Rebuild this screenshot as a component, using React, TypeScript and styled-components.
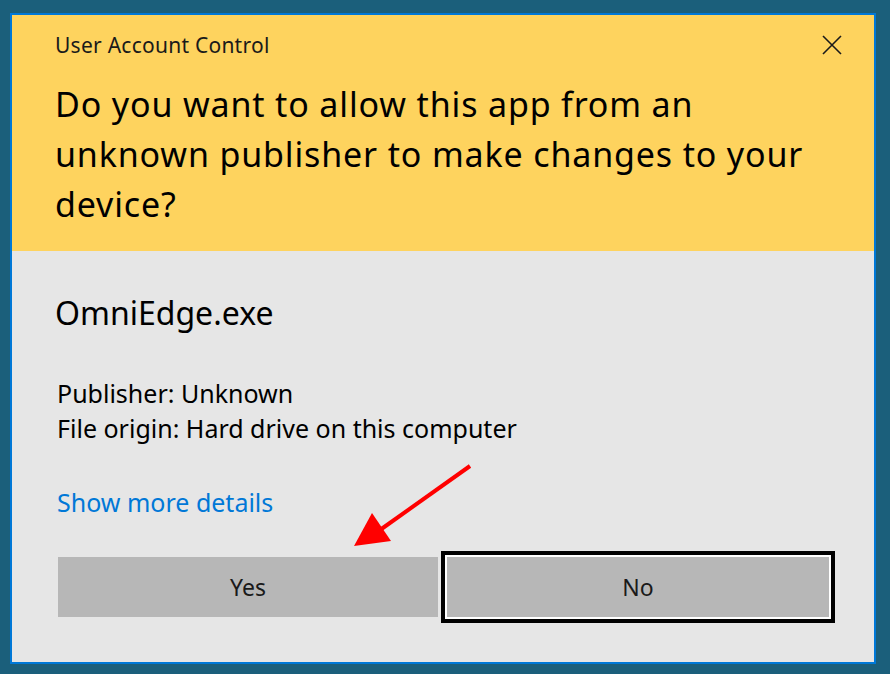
import React from "react";
import styled, { createGlobalStyle } from "styled-components";

const GlobalStyle = createGlobalStyle`
  html, body {
    margin: 0;
    padding: 0;
    background: #1b5f7b;
  }
  body {
    font-family: "Noto Sans", "Open Sans", sans-serif;
    -webkit-font-smoothing: antialiased;
  }
`;

const Page = styled.div`
  position: relative;
  width: 890px;
  height: 674px;
  box-sizing: border-box;
  padding: 13px 14px 10px 10px;
  background: #1b5f7b;
  overflow: hidden;
`;

const Dialog = styled.div`
  width: 866px;
  height: 651px;
  box-sizing: border-box;
  border: 2px solid #0078d7;
  display: flex;
  flex-direction: column;
  background: #e6e6e6;
`;

const Header = styled.div`
  background: #fed35e;
  height: 236px;
  box-sizing: border-box;
  padding: 16px 32px 0 43px;
  display: flex;
  flex-direction: column;
`;

const TitleBar = styled.div`
  display: flex;
  align-items: center;
  justify-content: space-between;
  height: 28px;
`;

const Caption = styled.span`
  font-size: 21px;
  line-height: 28px;
  color: #1a1a1a;
  letter-spacing: 0.25px;
`;

const CloseButton = styled.button`
  width: 20px;
  height: 20px;
  padding: 0;
  margin: 0;
  border: none;
  background: transparent;
  display: flex;
  align-items: center;
  justify-content: center;
  cursor: pointer;
`;

const Question = styled.h1`
  margin: 20px 0 0 0;
  font-size: 34px;
  line-height: 50px;
  font-weight: 400;
  color: #000;
  letter-spacing: 0.85px;
  max-width: 775px;
`;

const Body = styled.div`
  flex: 1;
  display: flex;
  flex-direction: column;
  padding: 42px 0 0 45px;
`;

const AppName = styled.div`
  margin-left: -2px;
  font-size: 32px;
  line-height: 40px;
  color: #000;
`;

const Details = styled.div`
  margin-top: 43px;
  display: flex;
  flex-direction: column;
`;

const DetailLine = styled.div`
  font-size: 25px;
  line-height: 35px;
  color: #000;
`;

const MoreLink = styled.a`
  margin-top: 39px;
  font-size: 25px;
  line-height: 35px;
  color: #0078d7;
  text-decoration: none;
  align-self: flex-start;
  cursor: pointer;
`;

const ButtonRow = styled.div`
  margin: 37px 0 0 1px;
  display: flex;
  gap: 9px;
`;

const DialogButton = styled.button<{ $focused?: boolean; $w: number }>`
  width: ${(p) => p.$w}px;
  height: 60px;
  border: none;
  margin: 0;
  padding: 0;
  background: #b7b7b7;
  color: #1a1a1a;
  font-family: "Noto Sans", "Open Sans", sans-serif;
  font-size: 23px;
  cursor: pointer;
  box-shadow: ${(p) =>
    p.$focused ? "0 0 0 2px #ffffff, 0 0 0 6px #000000" : "none"};
`;

const Overlay = styled.svg`
  position: absolute;
  top: 0;
  left: 0;
  pointer-events: none;
`;

export default function App() {
  return (
    <>
      <GlobalStyle />
      <Page>
        <Dialog>
          <Header>
            <TitleBar>
              <Caption>User Account Control</Caption>
              <CloseButton aria-label="Close">
                <svg width="20" height="20" viewBox="0 0 20 20">
                  <path
                    d="M1 1 L19 19 M19 1 L1 19"
                    stroke="#1a1a1a"
                    strokeWidth="1.6"
                    fill="none"
                  />
                </svg>
              </CloseButton>
            </TitleBar>
            <Question>
              Do you want to allow this app from an unknown publisher to make
              changes to your device?
            </Question>
          </Header>
          <Body>
            <AppName>OmniEdge.exe</AppName>
            <Details>
              <DetailLine>Publisher: Unknown</DetailLine>
              <DetailLine>File origin: Hard drive on this computer</DetailLine>
            </Details>
            <MoreLink>Show more details</MoreLink>
            <ButtonRow>
              <DialogButton $w={380}>Yes</DialogButton>
              <DialogButton $w={382} $focused>
                No
              </DialogButton>
            </ButtonRow>
          </Body>
        </Dialog>
        <Overlay width="890" height="674" viewBox="0 0 890 674">
          <line
            x1="470"
            y1="466"
            x2="380"
            y2="530"
            stroke="#ff0000"
            strokeWidth="4"
          />
          <polygon points="354,546 372,513 391,541" fill="#ff0000" />
        </Overlay>
      </Page>
    </>
  );
}
